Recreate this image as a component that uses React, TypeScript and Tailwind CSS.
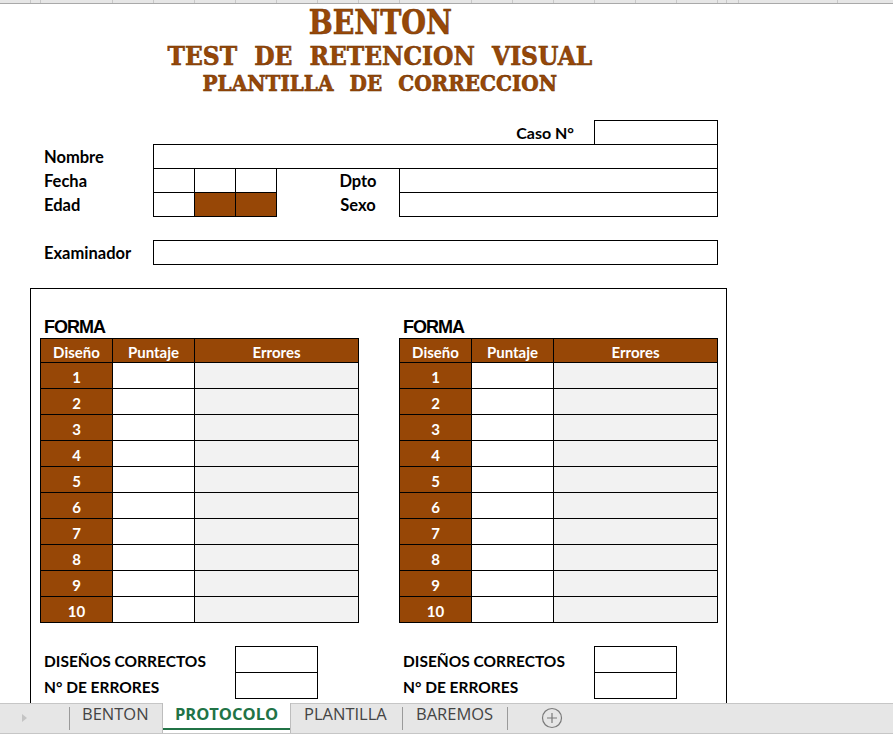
import React from 'react'

// column header strip widths (px, each includes its right gridline)
const stripCols = [31, 10, 72, 41, 41, 41, 41, 41, 41, 41, 72, 41, 41, 41, 41, 41, 41, 9, 12, 99]

const rows = [1, 2, 3, 4, 5, 6, 7, 8, 9, 10]

function ColumnStrip() {
  return (
    <div className="flex h-[4px] border-b border-[#a9a9a9] bg-[#e6e6e6]">
      {stripCols.map((w, i) => (
        <div key={i} className="h-full shrink-0 border-r border-[#c8c8c8]" style={{ width: w }} />
      ))}
    </div>
  )
}

function Titles() {
  return (
    <div className="flex w-[760px] flex-col items-center font-['DejaVu_Serif',serif] font-bold leading-none text-[#984807] [-webkit-text-stroke:0.6px_#6e3304]">
      <div className="scale-x-[0.86] pt-[2px] text-[33px]">BENTON</div>
      <div className="mt-[4px] scale-x-[0.9] text-[26px] [word-spacing:10px]">TEST DE RETENCION VISUAL</div>
      <div className="mt-[3px] scale-x-[0.91] text-[22px] [word-spacing:10px]">PLANTILLA DE CORRECCION</div>
    </div>
  )
}

function Label({ children }: { children: React.ReactNode }) {
  return (
    <div className="flex h-[24px] w-[153px] shrink-0 items-center pl-[44px] pt-[3px] text-[16.5px] font-bold">
      {children}
    </div>
  )
}

function FormFields() {
  return (
    <div className="mt-[26px]">
      <div className="flex h-[24px]">
        <div className="flex h-[24px] w-[594px] shrink-0 items-center justify-end pr-[20px] pt-[2px] text-[16px] font-bold">
          Caso N°
        </div>
        <div className="h-[25px] w-[124px] shrink-0 border border-black" />
      </div>
      <div className="flex h-[24px]">
        <Label>Nombre</Label>
        <div className="h-[25px] w-[565px] shrink-0 border border-black" />
      </div>
      <div className="flex h-[24px]">
        <Label>Fecha</Label>
        <div className="h-[25px] w-[42px] shrink-0 border border-black" />
        <div className="-ml-px h-[25px] w-[42px] shrink-0 border border-black" />
        <div className="-ml-px h-[25px] w-[42px] shrink-0 border border-black" />
        <div className="flex h-[24px] w-[122px] shrink-0 items-center justify-center pl-[40px] pt-[3px] text-[16.5px] font-bold">
          Dpto
        </div>
        <div className="h-[25px] w-[319px] shrink-0 border border-black" />
      </div>
      <div className="flex h-[24px]">
        <Label>Edad</Label>
        <div className="h-[25px] w-[42px] shrink-0 border border-black" />
        <div className="-ml-px h-[25px] w-[42px] shrink-0 border border-black bg-[#974706]" />
        <div className="-ml-px h-[25px] w-[42px] shrink-0 border border-black bg-[#974706]" />
        <div className="flex h-[24px] w-[122px] shrink-0 items-center justify-center pl-[40px] pt-[3px] text-[16.5px] font-bold">
          Sexo
        </div>
        <div className="h-[25px] w-[319px] shrink-0 border border-black" />
      </div>
      <div className="mt-[24px] flex h-[24px]">
        <Label>Examinador</Label>
        <div className="h-[25px] w-[565px] shrink-0 border border-black" />
      </div>
    </div>
  )
}

function FormaTable() {
  return (
    <div className="w-[319px]">
      <div className="h-[49px] pl-[4px] pt-[29px] font-['Liberation_Sans',sans-serif] text-[18px] font-bold leading-[18px] tracking-[-1px]">
        FORMA
      </div>
      <div className="grid grid-cols-[72px_82px_164px] border-l border-t border-black text-[15px] font-bold">
        <div className="flex h-[24px] items-center justify-center border-b border-r border-black bg-[#974706] pt-[3px] text-white">
          Diseño
        </div>
        <div className="flex h-[24px] items-center justify-center border-b border-r border-black bg-[#974706] pt-[3px] text-white">
          Puntaje
        </div>
        <div className="flex h-[24px] items-center justify-center border-b border-r border-black bg-[#974706] pt-[3px] text-white">
          Errores
        </div>
        {rows.map((n) => (
          <React.Fragment key={n}>
            <div className="flex h-[26px] items-center justify-center border-b border-r border-black bg-[#974706] pt-[3px] text-white">
              {n}
            </div>
            <div className="h-[26px] border-b border-r border-black bg-white" />
            <div className="h-[26px] border-b border-r border-black bg-[#f2f2f2]" />
          </React.Fragment>
        ))}
      </div>
    </div>
  )
}

function Totals() {
  return (
    <div className="flex">
      <div className="flex w-[195px] shrink-0 flex-col pl-[4px] text-[15.5px] font-bold">
        <div className="flex h-[26px] items-center pt-[5px]">DISEÑOS CORRECTOS</div>
        <div className="flex h-[26px] items-center pt-[5px]">N° DE ERRORES</div>
      </div>
      <div className="flex w-[83px] shrink-0 flex-col">
        <div className="h-[27px] border border-black" />
        <div className="-mt-px h-[27px] border border-black" />
      </div>
    </div>
  )
}

function Frame() {
  return (
    <div className="ml-[30px] mt-[24px] h-[500px] w-[697px] border-x border-t border-black pl-[9px]">
      <div className="flex gap-[40px]">
        <FormaTable />
        <FormaTable />
      </div>
      <div className="mt-[23px] flex gap-[81px]">
        <Totals />
        <Totals />
      </div>
    </div>
  )
}

function TabBar() {
  return (
    <div className="flex h-[31px] shrink-0 items-stretch border-y border-[#c6c6c6] bg-[#e6e6e6] font-['Open_Sans',sans-serif] text-[16.5px] leading-none text-[#444]">
      <div className="flex w-[69px] shrink-0 items-center pb-[2px] pl-[21px]">
        <svg width="7" height="10" viewBox="0 0 7 10">
          <polygon points="1,1 6,5 1,9" fill="#c4c4c4" />
        </svg>
      </div>
      <div className="my-[3px] w-px shrink-0 bg-[#9a9a9a]" />
      <div className="w-[92px] shrink-0 pl-[12px] pt-[2px]">BENTON</div>
      <div className="-mt-px relative flex w-[129px] shrink-0 justify-center border-x border-[#bdbdbd] bg-white pt-[3px] font-bold text-[#217346]">
        PROTOCOLO
        <div className="absolute bottom-[3px] left-0 right-0 h-[2px] bg-[#217346]" />
      </div>
      <div className="w-[111px] shrink-0 pl-[13px] pt-[2px]">PLANTILLA</div>
      <div className="my-[3px] w-px shrink-0 bg-[#9a9a9a]" />
      <div className="w-[104px] shrink-0 pl-[13px] pt-[2px]">BAREMOS</div>
      <div className="my-[3px] w-px shrink-0 bg-[#9a9a9a]" />
      <div className="flex w-[88px] shrink-0 items-center justify-center pb-[1px]">
        <svg width="22" height="22" viewBox="0 0 22 22" fill="none" stroke="#7a7a7a" strokeWidth="1.2">
          <circle cx="11" cy="11" r="9.5" />
          <path d="M11 6v10M6 11h10" />
        </svg>
      </div>
    </div>
  )
}

export default function App() {
  return (
    <div className="flex h-screen flex-col overflow-hidden bg-white font-['Lato',sans-serif] text-black">
      <div className="min-h-0 flex-1 overflow-hidden">
        <ColumnStrip />
        <Titles />
        <FormFields />
        <Frame />
      </div>
      <TabBar />
    </div>
  )
}
